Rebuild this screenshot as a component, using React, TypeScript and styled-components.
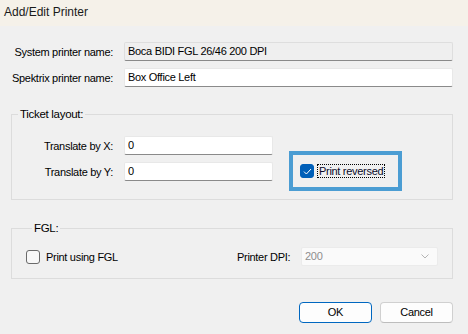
import React from 'react';
import styled, { createGlobalStyle } from 'styled-components';

const GlobalStyle = createGlobalStyle`
  html, body {
    margin: 0;
    padding: 0;
    background: #f0f0f0;
  }
  * {
    box-sizing: border-box;
  }
`;

const Window = styled.div`
  width: 468px;
  height: 334px;
  background: #f0f0f0;
  font-family: "Liberation Sans", Arial, sans-serif;
  font-size: 11px;
  letter-spacing: -0.3px;
  color: #000;
  overflow: hidden;
`;

const TitleBar = styled.div`
  height: 26px;
  background: #f5f1e9;
  display: flex;
  align-items: center;
  padding: 0 0 2px 4px;
  font-size: 12px;
  letter-spacing: 0;
  color: #1a1a1a;
`;

const Body = styled.div`
  padding: 16px 15px 0 11px;
  display: flex;
  flex-direction: column;
`;

const FieldRow = styled.div<{ $gap?: number }>`
  display: flex;
  align-items: center;
  height: 19px;
  margin-top: ${p => p.$gap ?? 0}px;
`;

const Label = styled.label<{ $width: number }>`
  width: ${p => p.$width}px;
  padding-right: 11px;
  text-align: right;
  white-space: nowrap;
`;

const TextBox = styled.input<{ $width: number; $readOnlyLook?: boolean }>`
  width: ${p => p.$width}px;
  height: 19px;
  margin: 0;
  padding: 0 3px 1px;
  font-family: inherit;
  font-size: 11px;
  letter-spacing: -0.3px;
  color: #000;
  background: ${p => (p.$readOnlyLook ? '#efefef' : '#ffffff')};
  border: 1px solid ${p => (p.$readOnlyLook ? '#dedede' : '#e8e8e8')};
  border-bottom: 1px solid #8a8a8a;
  border-radius: 2px;
  outline: none;
`;

const Group = styled.fieldset<{ $gap: number; $pad: string }>`
  margin: ${p => p.$gap}px 0 0 0;
  padding: ${p => p.$pad};
  min-width: 0;
  border: 1px solid #dcdcdc;
  border-radius: 0;
`;

const Legend = styled.legend`
  margin-left: 6px;
  padding: 0 2px;
  font-size: 11.5px;
  line-height: 14px;
  color: #000;
`;

const TicketBody = styled.div`
  display: flex;
  align-items: flex-start;
`;

const Column = styled.div`
  display: flex;
  flex-direction: column;
`;

const Highlight = styled.div`
  margin: 15px 0 0 16px;
  width: 113px;
  height: 40px;
  border: 4px solid #4b9dd3;
  display: flex;
  align-items: center;
  padding-left: 7px;
  gap: 3px;
`;

const CheckBox = styled.span<{ $checked?: boolean }>`
  width: 14px;
  height: 14px;
  flex: none;
  border-radius: 3px;
  display: flex;
  align-items: center;
  justify-content: center;
  background: ${p => (p.$checked ? '#005fb8' : '#f7f7f7')};
  border: 1px solid ${p => (p.$checked ? '#005fb8' : '#6a6a6a')};
`;

const FocusText = styled.span`
  border: 1px dotted #000;
  padding: 0 1px;
  line-height: 12px;
  color: #0a0a28;
`;

const FglRow = styled.div`
  display: flex;
  align-items: center;
  height: 19px;
`;

const CheckLabel = styled.label`
  display: flex;
  align-items: center;
  gap: 6px;
  width: 211px;
`;

const DpiLabel = styled.span`
  width: 64px;
`;

const Combo = styled.div`
  width: 137px;
  height: 19px;
  background: #fafafa;
  border: 1px solid #ebebeb;
  border-radius: 2px;
  display: flex;
  align-items: center;
  justify-content: space-between;
  padding: 0 8px 1px 3px;
  color: #8e8e8e;
`;

const ButtonBar = styled.div`
  display: flex;
  justify-content: flex-end;
  gap: 8px;
  margin-top: 23px;
`;

const Button = styled.button<{ $primary?: boolean }>`
  width: 73px;
  height: 21px;
  margin: 0;
  padding: 0 0 1px;
  font-family: inherit;
  font-size: 11px;
  letter-spacing: -0.3px;
  color: #000;
  background: #fdfdfd;
  border: 1px solid ${p => (p.$primary ? '#0067c0' : '#d0d0d0')};
  border-bottom-color: ${p => (p.$primary ? '#0067c0' : '#bdbdbd')};
  border-radius: 4px;
`;

export default function App() {
  return (
    <Window>
      <GlobalStyle />
      <TitleBar>Add/Edit Printer</TitleBar>
      <Body>
        <FieldRow>
          <Label $width={113}>System printer name:</Label>
          <TextBox $width={329} $readOnlyLook readOnly defaultValue="Boca BIDI FGL 26/46 200 DPI" />
        </FieldRow>
        <FieldRow $gap={7}>
          <Label $width={113}>Spektrix printer name:</Label>
          <TextBox $width={329} defaultValue="Box Office Left" />
        </FieldRow>

        <Group $gap={20} $pad="15px 0 8px 0">
          <Legend>Ticket layout:</Legend>
          <TicketBody>
            <Column>
              <FieldRow>
                <Label $width={112}>Translate by X:</Label>
                <TextBox $width={149} defaultValue="0" />
              </FieldRow>
              <FieldRow $gap={7}>
                <Label $width={112}>Translate by Y:</Label>
                <TextBox $width={149} defaultValue="0" />
              </FieldRow>
            </Column>
            <Highlight>
              <CheckBox $checked>
                <svg width="9" height="7" viewBox="0 0 9 7">
                  <path d="M1 3.6 L3.4 6 L8 1" fill="none" stroke="#ffffff" strokeWidth="1" />
                </svg>
              </CheckBox>
              <FocusText>Print reversed</FocusText>
            </Highlight>
          </TicketBody>
        </Group>

        <Group $gap={21} $pad="12px 0 12px 14px">
          <Legend>FGL:</Legend>
          <FglRow>
            <CheckLabel>
              <CheckBox />
              Print using FGL
            </CheckLabel>
            <DpiLabel>Printer DPI:</DpiLabel>
            <Combo>
              <span>200</span>
              <svg width="8" height="5" viewBox="0 0 8 5">
                <path d="M0.5 0.5 L4 4 L7.5 0.5" fill="none" stroke="#b4b4b4" strokeWidth="1" />
              </svg>
            </Combo>
          </FglRow>
        </Group>

        <ButtonBar>
          <Button $primary>OK</Button>
          <Button>Cancel</Button>
        </ButtonBar>
      </Body>
    </Window>
  );
}
